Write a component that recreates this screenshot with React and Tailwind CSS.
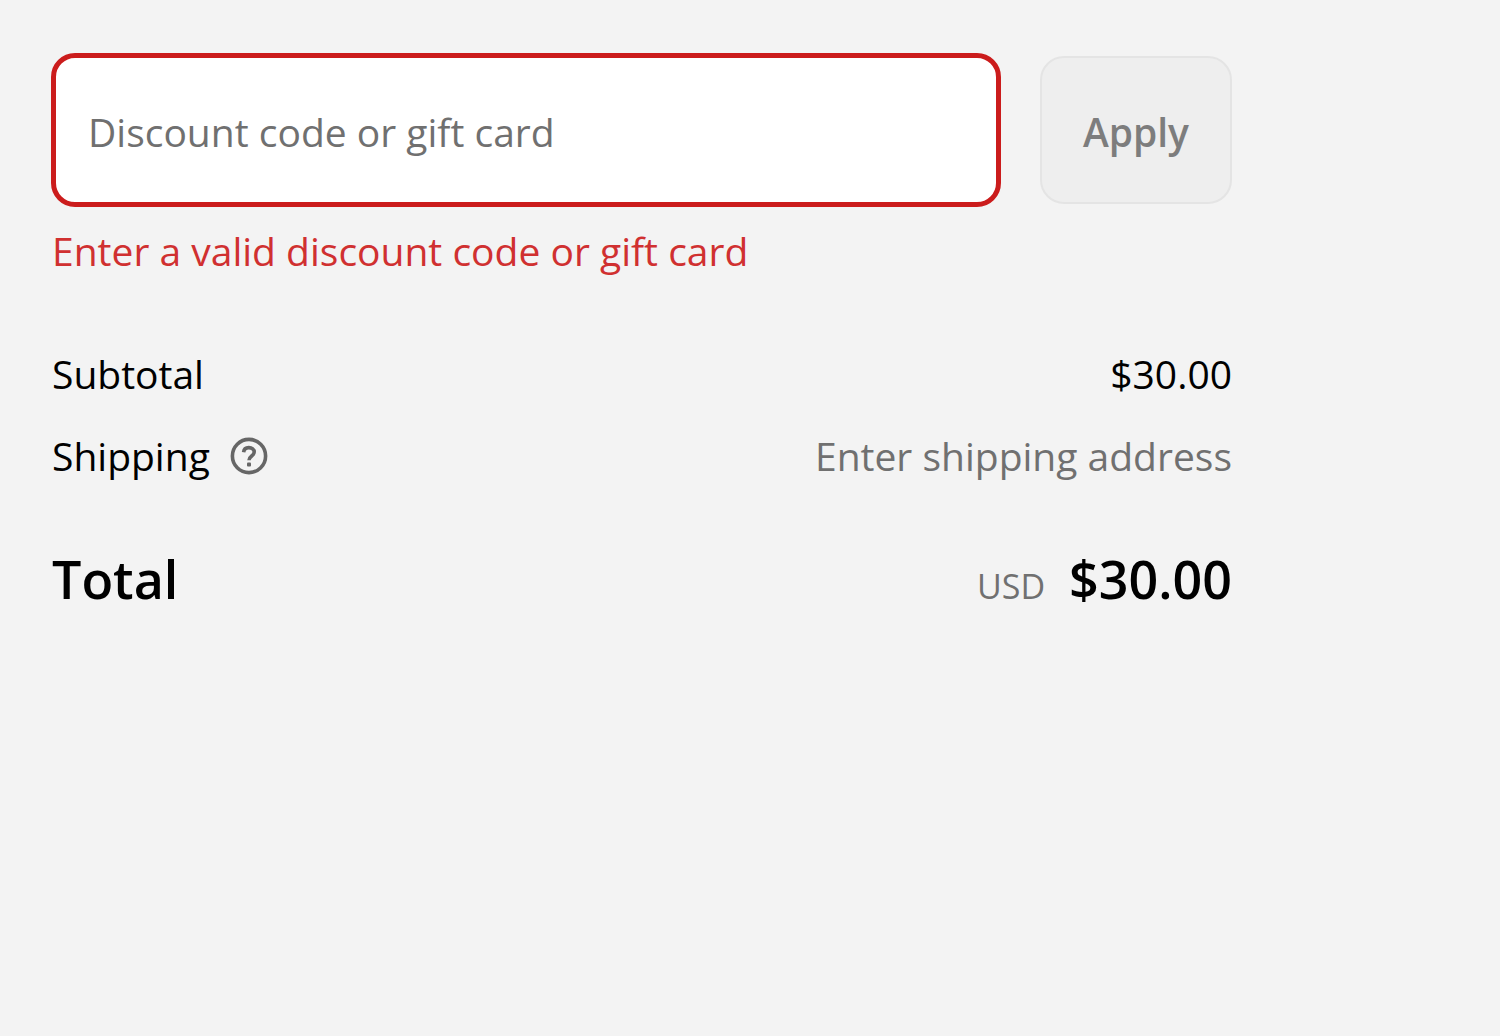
import React, { useState } from 'react';

const HelpIcon = () => (
  <svg viewBox="0 0 38 38" className="size-[38px]" fill="none" stroke="#666666" strokeWidth="3.6" aria-hidden="true">
    <circle cx="19" cy="19" r="16.6" />
    <path d="M13.6 15.2c.3-3 2.4-4.6 5.2-4.6 3.2 0 5.4 1.8 5.4 4.5 0 3.9-5.2 3.9-5.2 8.1" />
    <rect x="17" y="25.4" width="4" height="4" rx="1" fill="#666666" stroke="none" />
  </svg>
);

const DiscountForm = () => {
  const [code, setCode] = useState('');

  return (
    <form onSubmit={e => e.preventDefault()}>
      <div className="flex items-center gap-[39px]">
        <input
          type="text"
          value={code}
          onChange={e => setCode(e.target.value)}
          placeholder="Discount code or gift card"
          aria-label="Discount code or gift card"
          aria-invalid="true"
          aria-describedby="discount-error"
          className="h-[154px] min-w-0 flex-1 rounded-3xl border-[5px] border-[#cb1c1c] bg-white px-8 pt-0.5 text-[39px] text-[#707070] placeholder:text-[#707070] outline-none"
        />
        <button
          type="submit"
          disabled
          className="h-[148px] shrink-0 rounded-3xl border-2 border-[#e4e4e4] bg-[#eeeeee] px-[41px] pt-1 text-[39px] font-semibold text-[#7d7d7d]"
        >
          Apply
        </button>
      </div>
      <p id="discount-error" className="mt-[14px] pl-px text-[39px] leading-[60px] text-[#d03030]">
        Enter a valid discount code or gift card
      </p>
    </form>
  );
};

const App = () => (
  <main className="min-h-screen bg-[#f3f3f3] pt-[53px] pr-[268px] pl-[51px] font-['Open_Sans','Noto_Sans',sans-serif] text-black">
    <DiscountForm />

    {/* Cost summary */}
    <dl className="mt-[63px] pl-px text-[39px] leading-[60px]">
      <div className="flex items-center justify-between">
        <dt>Subtotal</dt>
        <dd>$30.00</dd>
      </div>
      <div className="mt-[22px] flex items-center justify-between">
        <dt className="flex items-center gap-5">
          Shipping
          <button type="button" aria-label="Shipping policy">
            <HelpIcon />
          </button>
        </dt>
        <dd className="text-[#707070]">Enter shipping address</dd>
      </div>
      <div className="mt-[63px] flex items-baseline justify-between text-[52px] font-semibold">
        <dt>Total</dt>
        <dd className="flex items-baseline gap-6">
          <span className="text-[34px] font-normal text-[#707070]">USD</span>
          $30.00
        </dd>
      </div>
    </dl>
  </main>
);

export default App;
